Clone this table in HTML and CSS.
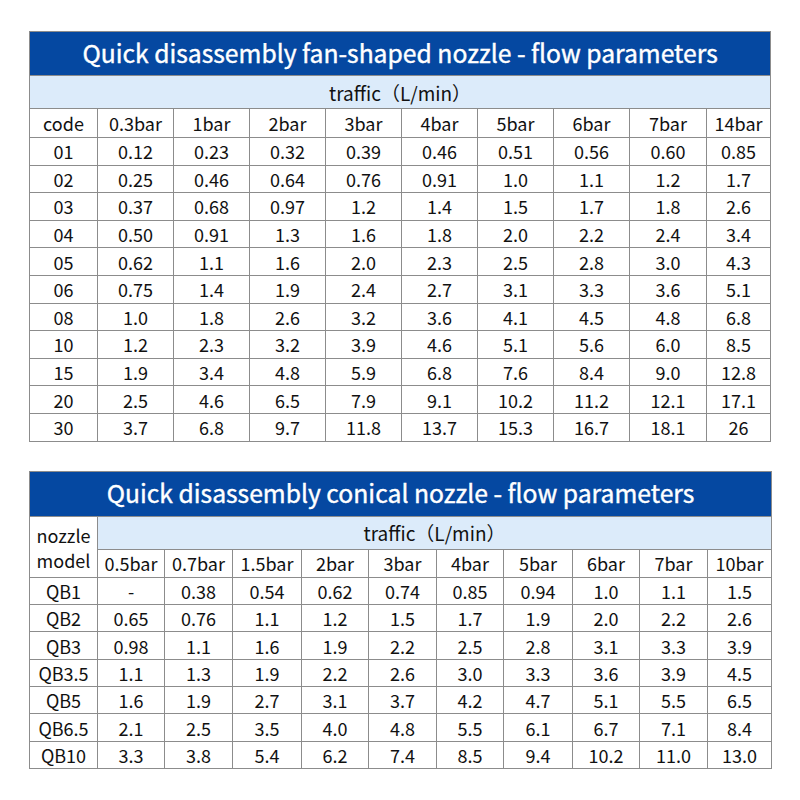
FILE: index.html
```html
<!DOCTYPE html>
<html>
<head>
<meta charset="utf-8">
<link rel="stylesheet" href="styles.css">
</head>
<body>
<div class="page">
  <table class="grid t1">
    <colgroup>
      <col style="width:68px"><col style="width:76px"><col style="width:76px"><col style="width:76px"><col style="width:76px"><col style="width:76px"><col style="width:76px"><col style="width:76px"><col style="width:77px"><col style="width:64px">
    </colgroup>
    <tr class="title"><th colspan="10">Quick disassembly fan-shaped nozzle - flow parameters</th></tr>
    <tr class="sub"><th colspan="10">traffic（L/min）</th></tr>
    <tr class="head"><td>code</td><td>0.3bar</td><td>1bar</td><td>2bar</td><td>3bar</td><td>4bar</td><td>5bar</td><td>6bar</td><td>7bar</td><td>14bar</td></tr>
    <tr><td>01</td><td>0.12</td><td>0.23</td><td>0.32</td><td>0.39</td><td>0.46</td><td>0.51</td><td>0.56</td><td>0.60</td><td>0.85</td></tr>
    <tr><td>02</td><td>0.25</td><td>0.46</td><td>0.64</td><td>0.76</td><td>0.91</td><td>1.0</td><td>1.1</td><td>1.2</td><td>1.7</td></tr>
    <tr><td>03</td><td>0.37</td><td>0.68</td><td>0.97</td><td>1.2</td><td>1.4</td><td>1.5</td><td>1.7</td><td>1.8</td><td>2.6</td></tr>
    <tr><td>04</td><td>0.50</td><td>0.91</td><td>1.3</td><td>1.6</td><td>1.8</td><td>2.0</td><td>2.2</td><td>2.4</td><td>3.4</td></tr>
    <tr><td>05</td><td>0.62</td><td>1.1</td><td>1.6</td><td>2.0</td><td>2.3</td><td>2.5</td><td>2.8</td><td>3.0</td><td>4.3</td></tr>
    <tr><td>06</td><td>0.75</td><td>1.4</td><td>1.9</td><td>2.4</td><td>2.7</td><td>3.1</td><td>3.3</td><td>3.6</td><td>5.1</td></tr>
    <tr><td>08</td><td>1.0</td><td>1.8</td><td>2.6</td><td>3.2</td><td>3.6</td><td>4.1</td><td>4.5</td><td>4.8</td><td>6.8</td></tr>
    <tr><td>10</td><td>1.2</td><td>2.3</td><td>3.2</td><td>3.9</td><td>4.6</td><td>5.1</td><td>5.6</td><td>6.0</td><td>8.5</td></tr>
    <tr><td>15</td><td>1.9</td><td>3.4</td><td>4.8</td><td>5.9</td><td>6.8</td><td>7.6</td><td>8.4</td><td>9.0</td><td>12.8</td></tr>
    <tr><td>20</td><td>2.5</td><td>4.6</td><td>6.5</td><td>7.9</td><td>9.1</td><td>10.2</td><td>11.2</td><td>12.1</td><td>17.1</td></tr>
    <tr><td>30</td><td>3.7</td><td>6.8</td><td>9.7</td><td>11.8</td><td>13.7</td><td>15.3</td><td>16.7</td><td>18.1</td><td>26</td></tr>
  </table>

  <table class="grid t2">
    <colgroup>
      <col style="width:68px"><col style="width:67px"><col style="width:68px"><col style="width:69px"><col style="width:67px"><col style="width:68px"><col style="width:67px"><col style="width:69px"><col style="width:67px"><col style="width:68px"><col style="width:64px">
    </colgroup>
    <tr class="title"><th colspan="11">Quick disassembly conical nozzle - flow parameters</th></tr>
    <tr class="sub"><td rowspan="2" class="model">nozzle<br>model</td><th colspan="10">traffic（L/min）</th></tr>
    <tr class="head"><td>0.5bar</td><td>0.7bar</td><td>1.5bar</td><td>2bar</td><td>3bar</td><td>4bar</td><td>5bar</td><td>6bar</td><td>7bar</td><td>10bar</td></tr>
    <tr><td>QB1</td><td>-</td><td>0.38</td><td>0.54</td><td>0.62</td><td>0.74</td><td>0.85</td><td>0.94</td><td>1.0</td><td>1.1</td><td>1.5</td></tr>
    <tr><td>QB2</td><td>0.65</td><td>0.76</td><td>1.1</td><td>1.2</td><td>1.5</td><td>1.7</td><td>1.9</td><td>2.0</td><td>2.2</td><td>2.6</td></tr>
    <tr><td>QB3</td><td>0.98</td><td>1.1</td><td>1.6</td><td>1.9</td><td>2.2</td><td>2.5</td><td>2.8</td><td>3.1</td><td>3.3</td><td>3.9</td></tr>
    <tr><td>QB3.5</td><td>1.1</td><td>1.3</td><td>1.9</td><td>2.2</td><td>2.6</td><td>3.0</td><td>3.3</td><td>3.6</td><td>3.9</td><td>4.5</td></tr>
    <tr><td>QB5</td><td>1.6</td><td>1.9</td><td>2.7</td><td>3.1</td><td>3.7</td><td>4.2</td><td>4.7</td><td>5.1</td><td>5.5</td><td>6.5</td></tr>
    <tr><td>QB6.5</td><td>2.1</td><td>2.5</td><td>3.5</td><td>4.0</td><td>4.8</td><td>5.5</td><td>6.1</td><td>6.7</td><td>7.1</td><td>8.4</td></tr>
    <tr><td>QB10</td><td>3.3</td><td>3.8</td><td>5.4</td><td>6.2</td><td>7.4</td><td>8.5</td><td>9.4</td><td>10.2</td><td>11.0</td><td>13.0</td></tr>
  </table>
</div>
</body>
</html>
```
FILE: styles.css
```css
html, body {
  margin: 0;
  padding: 0;
  background: #ffffff;
}
.page {
  display: flex;
  flex-direction: column;
  align-items: flex-start;
  gap: 29px;
  padding: 31px 0 0 29px;
  font-family: "Noto Sans CJK SC", "Noto Sans", sans-serif;
  color: #111111;
}
.grid {
  border-collapse: collapse;
  table-layout: fixed;
  border: 1px solid #8c8c8c;
}
.t1 { width: 741px; }
.t2 { width: 742px; }
.grid td, .grid th {
  border: 1px solid #8c8c8c;
  padding: 0;
  text-align: center;
  vertical-align: middle;
  font-size: 18px;
  font-weight: 400;
  line-height: 1;
  white-space: nowrap;
}
.grid tr { height: 27.6px; }
.t2 tr { height: 27.4px; }
.grid .title { height: 44px; }
.t2 .title { height: 45px; }
.grid .title th {
  background: #0548a1;
  color: #ffffff;
  font-size: 24.7px;
  font-weight: 400;
  -webkit-text-stroke: 0.4px #ffffff;
  padding-bottom: 2px;
}
.grid .sub { height: 33px; }
.grid .sub th {
  background: #dcebfa;
  font-size: 19px;
}
.grid .head { height: 29px; }
.t2 .head { height: 28px; }
.grid .model {
  line-height: 1.35;
  padding-top: 2px;
}
```
